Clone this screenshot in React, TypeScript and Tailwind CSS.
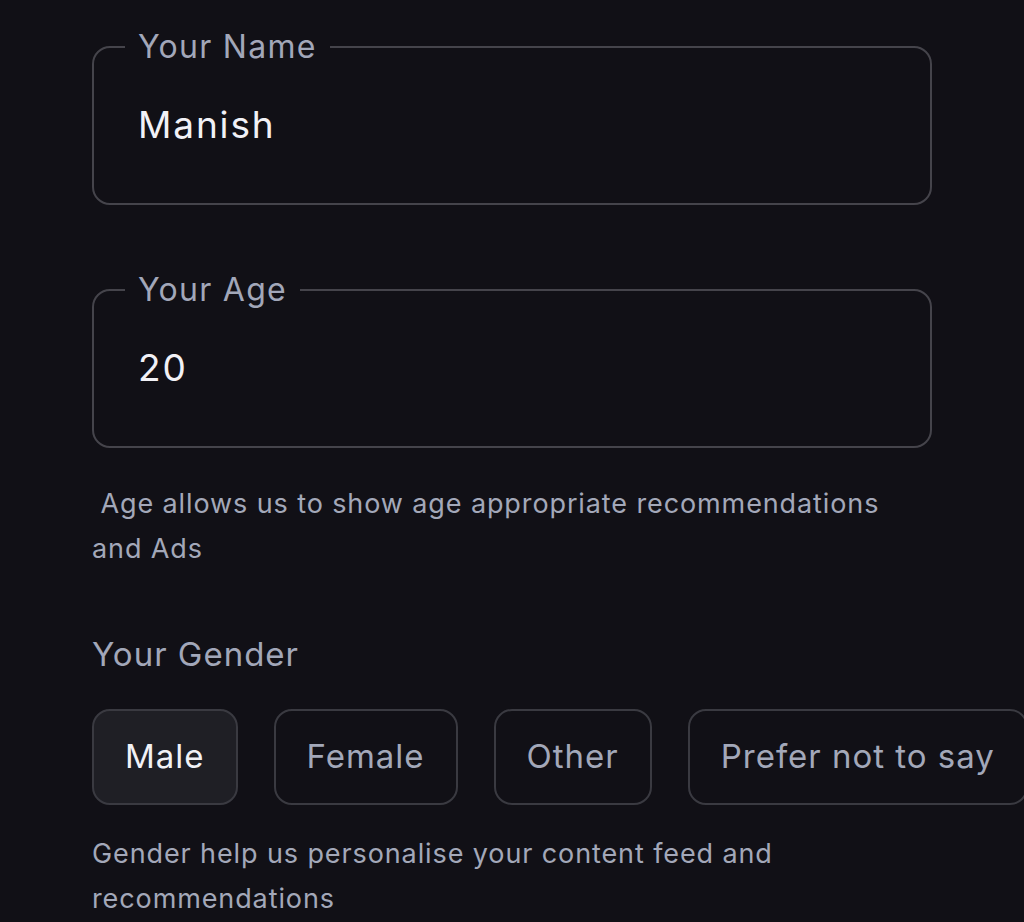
const genders = ["Male", "Female", "Other", "Prefer not to say"];

const Field = ({ label, value }: { label: string; value: string }) => {
  return (
    <fieldset className="w-[840px] rounded-[18px] border-2 border-[#45444b] px-[31px] pb-[56px]">
      <legend className="px-[13px] text-[32px] leading-[38px] tracking-[0.04em] text-[#a2a7b9]">{label}</legend>
      <div className="pl-[13px] pt-[37px] text-[37px] leading-[44px] tracking-[0.05em] text-[#f1f1f6]">{value}</div>
    </fieldset>
  );
};

export default function App() {
  const selected = "Male";
  return (
    <div className="min-h-[922px] w-[1024px] overflow-hidden bg-[#111016] pl-[92px] pt-[28px] font-['Inter',sans-serif]">
      <Field label="Your Name" value="Manish" />
      <div className="mt-[66px]">
        <Field label="Your Age" value="20" />
      </div>
      <p className="mt-[33px] w-[820px] text-[27px] leading-[45px] tracking-[0.033em] text-[#a3a8b9]">
        {"\u00a0Age allows us to show age appropriate recommendations and Ads"}
      </p>
      <h3 className="mt-[63px] text-[33px] leading-[40px] tracking-[0.03em] text-[#a2a7b9]">Your Gender</h3>
      <div className="mt-[35px] flex gap-[36px] whitespace-nowrap">
        {genders.map((g) => (
          <button
            key={g}
            className={
              g === selected
                ? "h-[96px] shrink-0 rounded-[18px] border-2 border-[#3a3a41] bg-[#1f1f25] px-[31px] text-[33px] tracking-[0.03em] text-[#f1f1f6]"
                : "h-[96px] shrink-0 rounded-[18px] border-2 border-[#3a3a41] bg-transparent px-[31px] text-[33px] tracking-[0.03em] text-[#a3a8b9]"
            }
          >
            {g}
          </button>
        ))}
      </div>
      <p className="mt-[26px] w-[720px] text-[27px] leading-[45px] tracking-[0.033em] text-[#a3a8b9]">
        Gender help us personalise your content feed and recommendations
      </p>
    </div>
  );
}
